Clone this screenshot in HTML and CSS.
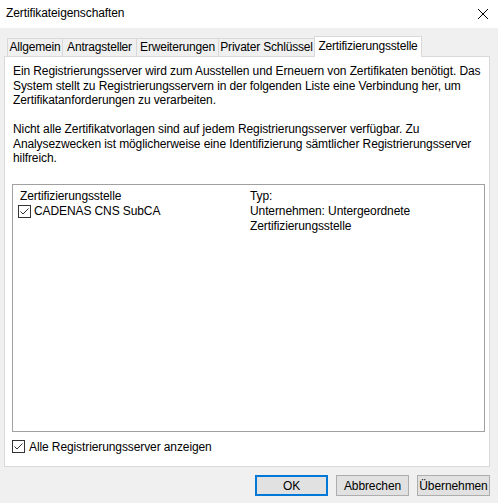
FILE: index.html
```html
<!DOCTYPE html>
<html lang="de">
<head>
<meta charset="utf-8">
<title>Zertifikateigenschaften</title>
<link rel="stylesheet" href="styles.css">
</head>
<body>
<div class="window">
  <div class="titlebar">
    <span class="title">Zertifikateigenschaften</span>
    <svg class="close" width="12" height="12" viewBox="0 0 12 12"><path d="M1 1L11 11M11 1L1 11" stroke="#000" stroke-width="1"/></svg>
  </div>
  <div class="tabs">
    <div class="tab w1">Allgemein</div>
    <div class="tab w2">Antragsteller</div>
    <div class="tab w3">Erweiterungen</div>
    <div class="tab w4">Privater Schlüssel</div>
    <div class="tab active">Zertifizierungsstelle</div>
  </div>
  <div class="panel">
    <p class="intro">Ein Registrierungsserver wird zum Ausstellen und Erneuern von Zertifikaten benötigt. Das<br>System stellt zu Registrierungsservern in der folgenden Liste eine Verbindung her, um<br>Zertifikatanforderungen zu verarbeiten.<br><br>Nicht alle Zertifikatvorlagen sind auf jedem Registrierungsserver verfügbar. Zu<br>Analysezwecken ist möglicherweise eine Identifizierung sämtlicher Registrierungsserver<br>hilfreich.</p>
    <div class="list">
      <div class="col c1">
        <div class="head">Zertifizierungsstelle</div>
        <div class="row">
          <svg class="cb" width="13" height="13" viewBox="0 0 13 13"><rect x="0.5" y="0.5" width="12" height="12" fill="#fff" stroke="#333"/><polyline points="2.5,6.5 5,9 10.5,3.5" fill="none" stroke="#333" stroke-width="1"/></svg>
          <span>CADENAS CNS SubCA</span>
        </div>
      </div>
      <div class="col c2">
        <div class="head">Typ:</div>
        <div>Unternehmen: Untergeordnete<br>Zertifizierungsstelle</div>
      </div>
    </div>
    <div class="showall">
      <svg class="cb" width="13" height="13" viewBox="0 0 13 13"><rect x="0.5" y="0.5" width="12" height="12" fill="#fff" stroke="#333"/><polyline points="2.5,6.5 5,9 10.5,3.5" fill="none" stroke="#333" stroke-width="1"/></svg>
      <span>Alle Registrierungsserver anzeigen</span>
    </div>
  </div>
  <div class="buttons">
    <button class="btn default">OK</button>
    <button class="btn">Abbrechen</button>
    <button class="btn">Übernehmen</button>
  </div>
</div>
</body>
</html>
```
FILE: styles.css
```css
html, body {
  margin: 0;
  padding: 0;
  background: #f0f0f0;
}
body {
  font-family: "Liberation Sans", Arial, sans-serif;
  font-size: 12px;
  letter-spacing: -0.1px;
  color: #000;
}
.window {
  width: 498px;
  height: 503px;
  background: #f0f0f0;
  overflow: hidden;
}
.titlebar {
  height: 28px;
  background: #fff;
  display: flex;
  align-items: center;
  justify-content: space-between;
  padding: 0 9px 2px 6px;
  box-sizing: border-box;
}
.title {
  font-size: 12px;
}
.close {
  display: block;
  margin-top: 1px;
}
.tabs {
  display: flex;
  align-items: flex-end;
  height: 20px;
  margin-top: 8px;
  padding-left: 7px;
}
.tab {
  box-sizing: border-box;
  height: 18px;
  border: 1px solid #d9d9d9;
  border-bottom: none;
  background: #f0f0f0;
  text-align: center;
  line-height: 17px;
  white-space: nowrap;
  margin-left: -1px;
  letter-spacing: -0.2px;
}
.tab.w1 { width: 56px; margin-left: 0; }
.tab.w2 { width: 75px; }
.tab.w3 { width: 83px; }
.tab.w4 { width: 97px; }
.tab.active {
  width: 108px;
  height: 21px;
  background: #fff;
  position: relative;
  z-index: 1;
  margin-bottom: -1px;
  line-height: 19px;
}
.panel {
  box-sizing: border-box;
  margin-left: 4px;
  width: 486px;
  height: 411px;
  border: 1px solid #d9d9d9;
  background: #fff;
  padding: 7px 8px 0 8px;
  display: flex;
  flex-direction: column;
}
.intro {
  margin: 0;
  line-height: 14.5px;
  white-space: nowrap;
}
.list {
  box-sizing: border-box;
  margin: 18px 0 0 -1px;
  width: 473px;
  height: 248px;
  border: 1px solid #a0a0a0;
  display: flex;
  padding: 4px 0 0 0;
  line-height: 15px;
}
.col.c1 {
  width: 232px;
  padding-left: 5px;
}
.col.c1 .head {
  padding-left: 2px;
}
.col.c2 {
  padding-left: 0;
}
.row {
  display: flex;
  align-items: center;
  gap: 3px;
}
.cb {
  display: block;
  flex: none;
}
.showall {
  display: flex;
  align-items: center;
  gap: 4px;
  margin: 8px 0 0 -1px;
}
.buttons {
  display: flex;
  justify-content: flex-end;
  gap: 8px;
  padding: 8px 8px 0 0;
}
.btn {
  box-sizing: border-box;
  width: 73px;
  height: 21px;
  background: #e1e1e1;
  border: 1px solid #adadad;
  font-family: "Liberation Sans", Arial, sans-serif;
  font-size: 12px;
  letter-spacing: -0.1px;
  color: #000;
  padding: 0;
  margin: 0;
}
.btn.default {
  border: 2px solid #0078d7;
}
```
